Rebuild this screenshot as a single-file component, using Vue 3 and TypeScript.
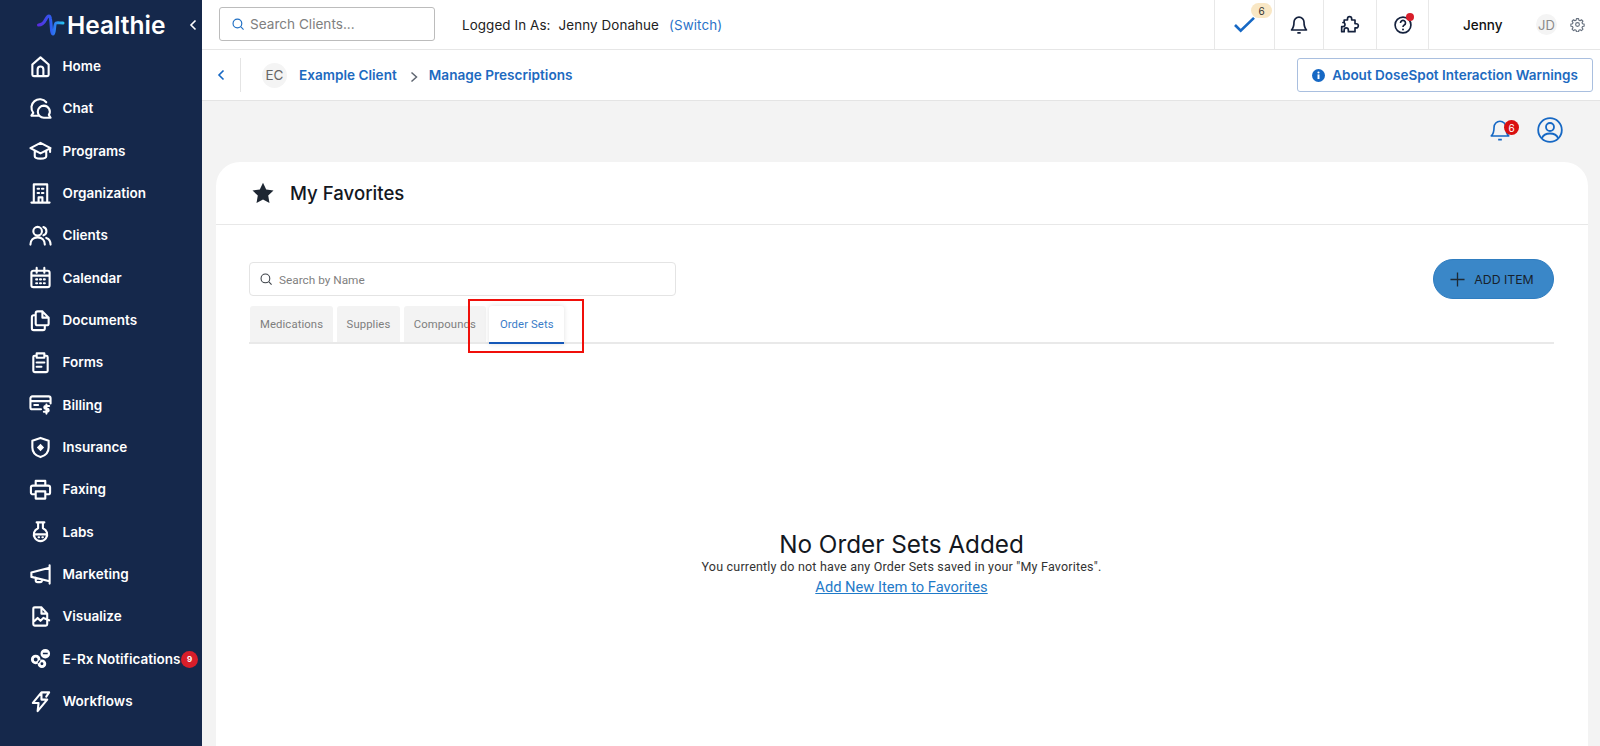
<script setup lang="ts">
interface NavItem { label: string; icon: string; solid?: string; badge?: number }
const nav: NavItem[] = [
  { label: 'Home', icon: 'M3.500 10 12 2.500l8.500 7.500v10.500a1.500 1.500 0 0 1-1.500 1.500H5a1.500 1.500 0 0 1-1.500-1.500Z M9 22v-7a3 3 0 0 1 6 0v7' },
  { label: 'Chat', icon: 'M4.500 16.500 A8.500 8.500 0 1 1 18 5.500 M4.500 16.500 L2.500 19.500 h7 M15.500 9 a6.300 6.300 0 1 0 0 12.600 h7 l-1.800-2.900 A6.300 6.300 0 0 0 15.500 9Z' },
  { label: 'Programs', icon: 'M12 4 1.500 9.500 12 15l10.500-5.500Z M6 12.500V18c0 1.500 3 2.500 6 2.500s6-1 6-2.500v-5.500 M22 9.500v4' },
  { label: 'Organization', icon: 'M5 21.500V2.500h14v19 M2.500 21.500h19 M10 21.500V16h4v5.500 M9 7h1.500 M13.500 7H15 M9 11.500h1.500 M13.500 11.500H15' },
  { label: 'Clients', icon: 'M9 12a4.500 4.500 0 1 0 0-9 4.500 4.500 0 0 0 0 9Z M1.500 21.500c0-5 3-7.500 7.500-7.500s7.500 2.500 7.500 7.500 M15 3.200a4.500 4.500 0 0 1 0 8.600 M18 14.500c3 1 4.500 3.500 4.500 7' },
  { label: 'Calendar', icon: 'M4.500 5h15a2 2 0 0 1 2 2v13a2 2 0 0 1-2 2h-15a2 2 0 0 1-2-2V7a2 2 0 0 1 2-2Z M2.500 10h19 M8 2v5 M16 2v5 M7.500 14h1 M11.500 14h1 M15.500 14h1 M7.500 18h1 M11.500 18h1 M15.500 18h1' },
  { label: 'Documents', icon: 'M9 2.500h5l6.500 6.500v6a2 2 0 0 1-2 2H9a2 2 0 0 1-2-2v-10.500a2 2 0 0 1 2-2Z M14 2.500V9h6.500 M7 6.500H5a2 2 0 0 0-2 2V20a2 2 0 0 0 2 2h9.500a2 2 0 0 0 2-2v-3' },
  { label: 'Forms', icon: 'M8 5H6a1.500 1.500 0 0 0-1.500 1.500v14A1.500 1.500 0 0 0 6 22h12a1.500 1.500 0 0 0 1.500-1.500v-14A1.500 1.500 0 0 0 18 5h-2 M8 2.500h8V7H8Z M8 12h8 M8 16.500h5' },
  { label: 'Billing', icon: 'M12.500 17H3.500a2 2 0 0 1-2-2V5.500a2 2 0 0 1 2-2h17a2 2 0 0 1 2 2V11 M1.500 8.500h21 M5.500 12.500h4 M21 13.500h-3.500a1.300 1.300 0 0 0 0 3H19a1.300 1.300 0 0 1 0 3h-3.500 M18.200 12v9.500' },
  { label: 'Insurance', icon: 'M12 2 20.500 5v7c0 5-3.500 8.500-8.500 10C7 20.500 3.500 17 3.500 12V5Z', solid: 'M12 8.200 15.800 12 12 15.800 8.200 12Z' },
  { label: 'Faxing', icon: 'M7 8V3h10v5 M7 17H4a2 2 0 0 1-2-2v-5a2 2 0 0 1 2-2h16a2 2 0 0 1 2 2v5a2 2 0 0 1-2 2h-3 M7 14h10v7.500H7Z' },
  { label: 'Labs', icon: 'M8 2.500h8 M9.500 2.500v6a7 7 0 1 0 5 0v-6 M5.500 15h13 M10 18h.5 M14 18h.5' },
  { label: 'Marketing', icon: 'M21.500 2.500v19 M21.500 5 2.500 10v4.500l19 4.500 M7 15.500V18a2 2 0 0 0 2 2h2.500a2 2 0 0 0 2-2v-.5' },
  { label: 'Visualize', icon: 'M19 9v11a1.500 1.500 0 0 1-1.500 1.500H6A1.500 1.500 0 0 1 4.500 20V4A1.500 1.500 0 0 1 6 2.500h7Z M13 2.500V9h6 M6 16.500l3-3 3 3 3-3 6 2.500' },
  { label: 'E-Rx Notifications', icon: '', solid: 'M17 2a5 5 0 1 1 0 10 5 5 0 0 1 0-10Zm-2.500 4v1.500h5V6Z M7 8a5 5 0 1 1 0 10A5 5 0 0 1 7 8Zm0 3a2 2 0 1 0 0 4 2 2 0 0 0 0-4Z M13.500 13a4.500 4.500 0 1 1 0 9 4.500 4.500 0 0 1 0-9Zm0 3a1.500 1.500 0 1 0 0 3 1.500 1.500 0 0 0 0-3Z', badge: 9 },
  { label: 'Workflows', icon: 'M13 2.500 4 13.500h6l-1 8.500 10-12h-6Z M14 2.500h7l-3 4.500' },
]
const tabs = ['Medications', 'Supplies', 'Compounds', 'Order Sets']
</script>

<template>
  <div class="app">
    <aside class="sidebar">
      <div class="brand">
        <svg class="logo" viewBox="0 0 28 22" width="28" height="22" aria-hidden="true">
          <defs>
            <linearGradient id="lg" x1="0" x2="1" y1="0" y2="0">
              <stop offset="0" stop-color="#5a2be0" />
              <stop offset="0.5" stop-color="#2f5cf0" />
              <stop offset="1" stop-color="#28c0f0" />
            </linearGradient>
          </defs>
          <path d="M1.500 11C5 11 7 9 9 5 11 1 13 1 13.500 5 14.500 11 14 20 16 20 18 20 17 10 19 9 20 8.500 23 9 26 9" fill="none" stroke="url(#lg)" stroke-width="3" stroke-linecap="round" />
        </svg>
        <span class="brand-name">Healthie</span>
        <svg class="collapse" viewBox="0 0 10 12" width="10" height="12"><path d="M7.500 1.500 3 6l4.500 4.500" fill="none" stroke="#fff" stroke-width="1.600" /></svg>
      </div>
      <nav class="nav">
        <div v-for="item in nav" :key="item.label" class="nav-item">
          <svg class="nav-icon" viewBox="0 0 24 24" width="23" height="23">
            <path v-if="item.icon" :d="item.icon" fill="none" stroke="#fff" stroke-width="2.200" stroke-linecap="round" stroke-linejoin="round" />
            <path v-if="item.solid" :d="item.solid" fill="#fff" fill-rule="evenodd" />
          </svg>
          <span class="nav-label">{{ item.label }}</span>
          <span v-if="item.badge" class="nav-badge">{{ item.badge }}</span>
        </div>
      </nav>
    </aside>

    <div class="main">
      <header class="topbar">
        <div class="client-search">
          <svg viewBox="0 0 24 24" width="14" height="14"><circle cx="11" cy="11" r="7.500" fill="none" stroke="#1f6fc4" stroke-width="2" /><path d="m17 17 4.500 4.500" stroke="#1f6fc4" stroke-width="2" /></svg>
          <span>Search Clients...</span>
        </div>
        <div class="logged">
          <span>Logged In As:</span>
          <span class="logged-name">Jenny Donahue</span>
          <span class="switch">(Switch)</span>
        </div>
        <div class="top-actions">
          <div class="act act-check">
            <svg viewBox="0 0 24 20" width="23" height="19"><path d="M2 10.500 8 16.500 22 3" fill="none" stroke="#1668c4" stroke-width="2.800" /></svg>
            <span class="check-badge">6</span>
          </div>
          <div class="act act-bell">
            <svg viewBox="0 0 24 24" width="20" height="20"><path d="M12 2.500a6 6 0 0 0-6 6c0 5-1 7.500-3 9.500h18c-2-2-3-4.500-3-9.500a6 6 0 0 0-6-6Z M10 21.500h4" fill="none" stroke="#14213d" stroke-width="2" stroke-linejoin="round" /></svg>
          </div>
          <div class="act act-puzzle">
            <svg viewBox="0 0 24 24" width="20" height="20"><path d="M9 4.500a2.500 2.500 0 0 1 5 0V6h4v4.500h1.500a2.500 2.500 0 0 1 0 5H18V20h-8v-2a2.500 2.500 0 0 0-5 0v2H2v-6h1.500a2.500 2.500 0 0 0 0-5H5V6h4Z" fill="none" stroke="#14213d" stroke-width="2" stroke-linejoin="round" /></svg>
          </div>
          <div class="act act-help">
            <svg viewBox="0 0 24 24" width="20" height="20"><circle cx="12" cy="12" r="9.500" fill="none" stroke="#14213d" stroke-width="2" /><path d="M9 9.500a3 3 0 1 1 4.500 2.600c-1 .6-1.500 1.200-1.500 2.400" fill="none" stroke="#14213d" stroke-width="2" /><circle cx="12" cy="17.500" r="1.200" fill="#14213d" /></svg>
            <span class="help-dot"></span>
          </div>
          <div class="user">
            <span class="user-name">Jenny</span>
            <span class="avatar avatar-jd">JD</span>
            <svg viewBox="0 0 24 24" width="15" height="15"><circle cx="12" cy="12" r="3" fill="none" stroke="#66707e" stroke-width="1.800" /><path d="M10.300 2.500h3.400l.5 2.600 1.900.8 2.200-1.500 2.400 2.400-1.500 2.200.8 1.900 2.600.5v3.400l-2.600.5-.8 1.900 1.500 2.200-2.400 2.400-2.200-1.500-1.900.8-.5 2.600h-3.400l-.5-2.600-1.900-.8-2.200 1.500-2.400-2.400 1.500-2.200-.8-1.900-2.600-.5v-3.400l2.600-.5.8-1.900-1.500-2.200 2.400-2.400 2.200 1.500 1.900-.8Z" fill="none" stroke="#66707e" stroke-width="1.800" stroke-linejoin="round" /></svg>
          </div>
        </div>
      </header>

      <div class="subbar">
        <div class="back">
          <svg viewBox="0 0 10 12" width="10" height="12"><path d="M7.500 1.500 3 6l4.500 4.500" fill="none" stroke="#1668c4" stroke-width="1.600" /></svg>
        </div>
        <span class="avatar avatar-ec">EC</span>
        <a class="crumb">Example Client</a>
        <svg class="crumb-sep" viewBox="0 0 10 12" width="10" height="12"><path d="M2.500 1.500 7.500 6l-5 4.500" fill="none" stroke="#5f6671" stroke-width="1.500" /></svg>
        <a class="crumb">Manage Prescriptions</a>
        <button class="about">
          <svg viewBox="0 0 24 24" width="13" height="13"><circle cx="12" cy="12" r="12" fill="#1668c4" /><rect x="10.200" y="10" width="3.600" height="8.500" fill="#fff" /><circle cx="12" cy="6.500" r="2" fill="#fff" /></svg>
          About DoseSpot Interaction Warnings
        </button>
      </div>

      <div class="content">
        <div class="notify-row">
          <div class="notify-bell">
            <svg viewBox="0 0 24 24" width="22" height="24"><path d="M12 2.500a6.500 6.500 0 0 0-6.500 6.500c0 5-.8 7.500-3 9.500h19c-2.200-2-3-4.500-3-9.500A6.500 6.500 0 0 0 12 2.500Z M10 22.500h4" fill="none" stroke="#1668c4" stroke-width="1.800" stroke-linejoin="round" /></svg>
            <span class="notify-badge">6</span>
          </div>
          <svg class="profile" viewBox="0 0 26 26" width="26" height="26"><circle cx="13" cy="13" r="11.800" fill="none" stroke="#1668c4" stroke-width="1.800" /><circle cx="13" cy="10" r="4" fill="none" stroke="#1668c4" stroke-width="1.800" /><path d="M5 21c1.500-3.500 4.500-4.500 8-4.500s6.500 1 8 4.500" fill="none" stroke="#1668c4" stroke-width="1.800" /></svg>
        </div>

        <section class="card">
          <div class="card-head">
            <svg viewBox="0 0 24 24" width="24" height="24"><path d="m12 1.800 3.200 6.700 7.300 1-5.300 5.100 1.300 7.300L12 18.400l-6.500 3.500 1.300-7.300L1.500 9.500l7.300-1Z" fill="#1e2733" /></svg>
            <h1>My Favorites</h1>
          </div>
          <div class="card-body">
            <div class="tools">
              <div class="name-search-col">
                <div class="name-search">
                  <svg viewBox="0 0 24 24" width="14" height="14"><circle cx="11" cy="11" r="7.500" fill="none" stroke="#3a3f46" stroke-width="1.800" /><path d="m17 17 4.500 4.500" stroke="#3a3f46" stroke-width="1.800" /></svg>
                  <span class="name-search-text">Search by Name</span>
                </div>
              </div>
              <button class="add-btn">
                <svg viewBox="0 0 16 16" width="15" height="15"><path d="M8 .5v15M.5 8h15" stroke="#1e2a36" stroke-width="1.400" /></svg>
                ADD ITEM
              </button>
            </div>
            <div class="tabs">
              <div v-for="tab in tabs" :key="tab" class="tab" :class="{ active: tab === 'Order Sets' }">{{ tab }}</div>
              <span class="annotation"></span>
            </div>
            <div class="empty">
              <h2>No Order Sets Added</h2>
              <p>You currently do not have any Order Sets saved in your "My Favorites".</p>
              <a>Add New Item to Favorites</a>
            </div>
          </div>
        </section>
      </div>
    </div>
  </div>
</template>

<style>
html, body { margin: 0; height: 100%; overflow: hidden; }
</style>

<style scoped>
* { box-sizing: border-box; }
.app { display: flex; width: 1600px; height: 746px; overflow: hidden; font-family: Inter, "Liberation Sans", sans-serif; background: #fff; }
.sidebar { width: 202px; flex: none; background: #15284b; color: #fff; }
.brand { display: flex; align-items: center; height: 49px; padding-left: 37px; position: relative; }
.logo { flex: none; margin-right: 2px; }
.brand-name { font-size: 24.500px; font-weight: 600; }
.collapse { position: absolute; left: 188px; top: 19px; }
.nav { display: flex; flex-direction: column; margin-top: -4px; }
.nav-item { display: flex; align-items: center; height: 42.33px; padding-left: 28.500px; position: relative; }
.nav-icon { flex: none; margin-right: 11px; }
.nav-label { font-size: 13.500px; font-weight: 600; white-space: nowrap; }
.nav-badge { position: absolute; left: 181px; top: 13px; width: 17px; height: 17px; border-radius: 50%; background: #d81e2a; font-size: 8px; font-weight: 700; display: flex; align-items: center; justify-content: center; }

.main { flex: 1; min-width: 0; display: flex; flex-direction: column; }
.topbar { height: 50px; flex: none; display: flex; align-items: center; border-bottom: 1px solid #e6e6e6; padding-left: 17px; background: #fff; }
.client-search { width: 216px; height: 34px; border: 1px solid #bcbcbc; border-radius: 3px; display: flex; align-items: center; gap: 5px; padding-left: 11px; font-size: 13.600px; color: #808080; margin-top: -1px; }
.logged { display: flex; align-items: center; margin-left: 27px; font-size: 13.400px; color: #222; letter-spacing: .1px; }
.logged-name { margin-left: 8px; }
.switch { margin-left: 10px; color: #2a72c8; }
.top-actions { margin-left: auto; display: flex; align-items: stretch; height: 49px; }
.act { display: flex; align-items: center; justify-content: center; border-left: 1px solid #e8e8e8; position: relative; }
.act-check { width: 60px; }
.act-bell { width: 49px; }
.act-puzzle { width: 53px; }
.act-help { width: 52px; }
.check-badge { position: absolute; left: 36px; top: 3px; width: 21px; height: 15px; border-radius: 8px; background: #f9e7c4; font-size: 10px; color: #333; display: flex; align-items: center; justify-content: center; }
.help-dot { position: absolute; left: 29px; top: 13px; width: 8px; height: 8px; border-radius: 50%; background: #d81e2a; }
.user { width: 172px; border-left: 1px solid #e8e8e8; display: flex; align-items: center; padding-left: 34px; }
.user-name { font-size: 13.500px; font-weight: 500; color: #111; width: 73px; }
.avatar { border-radius: 50%; background: #f4f4f4; color: #666; display: flex; align-items: center; justify-content: center; flex: none; }
.avatar-jd { width: 21px; height: 21px; font-size: 13px; color: #8a8a8a; margin-right: 13px; }

.subbar { height: 51px; flex: none; display: flex; align-items: center; border-bottom: 1px solid #e4e4e4; background: #fff; }
.back { width: 39px; height: 34px; border-right: 1px solid #e4e4e4; display: flex; align-items: center; justify-content: center; margin-right: 21px; padding-right: 1px; }
.avatar-ec { width: 25px; height: 25px; font-size: 13.500px; margin-right: 12px; }
.crumb { color: #1d6ac0; font-size: 13.600px; font-weight: 600; }
.crumb-sep { margin: 3px 10px 0 12px; }
.about { margin-left: auto; margin-right: 7px; width: 296px; height: 34px; border: 1px solid #a9bfdf; border-radius: 3px; background: #fff; color: #1d6ac0; font: 600 13.500px Inter, "Liberation Sans", sans-serif; display: flex; align-items: center; justify-content: center; gap: 7px; padding: 0; }

.content { flex: 1; min-height: 0; background: #f3f3f3; padding: 0 12px 0 14px; display: flex; flex-direction: column; }
.notify-row { height: 61px; flex: none; display: flex; align-items: flex-start; justify-content: flex-end; gap: 23px; padding: 17px 25px 0 0; }
.notify-bell { position: relative; width: 24px; height: 24px; margin-right: 1px; }
.notify-badge { position: absolute; left: 15px; top: 2px; width: 15px; height: 15px; border-radius: 50%; background: #d90f0f; color: #fff; font-size: 10px; display: flex; align-items: center; justify-content: center; }
.profile { margin-top: -1px; }
.card { flex: 1; background: #fff; border-radius: 24px 24px 0 0; display: flex; flex-direction: column; min-height: 0; }
.card-head { height: 63px; flex: none; display: flex; align-items: center; gap: 15px; padding-left: 35px; border-bottom: 1px solid #e8e8e8; }
.card-head h1 { margin: 0; font-size: 18.600px; font-weight: 500; color: #14181f; }
.card-body { padding: 34px 34px 0 33px; flex: 1; }
.tools { display: flex; justify-content: space-between; align-items: flex-start; }
.name-search-col { padding-top: 3px; }
.name-search { width: 427px; height: 34px; border: 1px solid #e4e4e4; border-radius: 4px; display: flex; align-items: center; gap: 6px; padding-left: 9px; font-family: Roboto, sans-serif; font-size: 11.800px; color: #7f7f7f; }
.name-search-text { padding-top: 2px; }
.add-btn { width: 121px; height: 40px; border-radius: 20px; border: 1px solid #2f7dc0; background: #3a87c8; color: #17212c; font: 400 12.300px Inter, sans-serif; display: flex; align-items: center; justify-content: center; gap: 9px; padding: 0 3px 0 0; }
.tabs { display: flex; gap: 3.500px; height: 38px; margin-top: 7px; border-bottom: 2px solid #e9e9e9; position: relative; padding-left: 1px; }
.tab { height: 36px; padding: 0 10px; background: #f3f3f3; border-radius: 3px 3px 0 0; font-family: Roboto, sans-serif; font-size: 11.300px; color: #7e7e7e; display: flex; align-items: center; letter-spacing: .1px; }
.tab.active { background: #fff; color: #3a7cc8; border-bottom: 2px solid #1558b8; padding: 0 10.500px; box-shadow: 0 0 5px rgba(0,0,0,.12); height: 38px; }
.annotation { position: absolute; left: 219px; top: -7px; width: 116px; height: 54px; border: 2px solid #f00f0a; }
.empty { text-align: center; margin-top: 185px; display: flex; flex-direction: column; align-items: center; }
.empty h2 { margin: 0; font-size: 24.300px; font-weight: 400; line-height: 30px; color: #13181f; font-family: Inter, sans-serif; }
.empty p { margin: 0; font-family: Roboto, sans-serif; font-size: 12.500px; line-height: 15px; color: #333; letter-spacing: .2px; }
.empty a { font-family: Roboto, sans-serif; font-size: 14.700px; line-height: 26px; color: #1f7ac8; text-decoration: underline; }
</style>
